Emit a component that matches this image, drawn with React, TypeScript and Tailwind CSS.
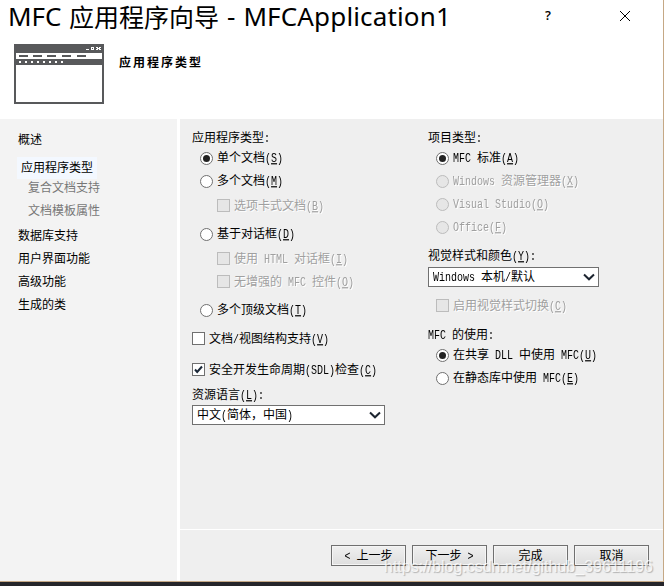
import React from 'react';
import clsx from 'clsx';

interface LabelProps {
  text: string;
  hotkey?: string;
  suffix?: string;
  disabled?: boolean;
  className?: string;
}

// Half-width characters take exactly half of a full-width cell
function Mixed({ text }: { text: string }): React.JSX.Element {
  return (
    <>
      {text.split(/([\x20-\x7e]+)/).map((part, i) =>
        i % 2 === 1 ? (
          <span
            key={i}
            className="inline-block origin-[50%_70%] scale-y-120 font-['Liberation_Mono',monospace] text-[10px]"
          >
            {part}
          </span>
        ) : (
          part
        )
      )}
    </>
  );
}

function Label({ text, hotkey, suffix = '', disabled, className }: LabelProps): React.JSX.Element {
  return (
    <span
      className={clsx(
        'block h-[13px] whitespace-pre leading-[13px]',
        disabled ? 'text-[#a0a0a0] [text-shadow:1px_1px_0_#fff]' : 'text-black',
        className
      )}
    >
      <span className="relative -top-px">
        <Mixed text={hotkey ? `${text}(` : text} />
        {hotkey && (
          <span className="inline-block origin-[50%_70%] scale-y-120 font-['Liberation_Mono',monospace] text-[10px] underline decoration-1 underline-offset-1">
            {hotkey}
          </span>
        )}
        <Mixed text={hotkey ? `)${suffix}` : suffix} />
      </span>
    </span>
  );
}

interface OptionProps extends LabelProps {
  checked?: boolean;
  lift?: string;
}

function Radio({ checked, disabled, className, lift = 'mb-[3px]', ...label }: OptionProps): React.JSX.Element {
  return (
    <div className={clsx('flex h-[13px] items-center gap-1', className)}>
      <span
        className={clsx(
          'flex size-[13px] shrink-0 items-center justify-center rounded-full border',
          disabled ? 'border-[#bcbcbc] bg-[#e6e6e6]' : 'border-[#707070] bg-white'
        )}
      >
        {checked && <span className="size-[7px] rounded-full bg-[#222]" />}
      </span>
      <Label {...label} disabled={disabled} className={lift} />
    </div>
  );
}

function Check({ checked, disabled, className, lift, ...label }: OptionProps): React.JSX.Element {
  return (
    <div className={clsx('flex h-[13px] items-center gap-1', className)}>
      <span
        className={clsx(
          'flex size-[13px] shrink-0 items-center justify-center border',
          disabled ? 'border-[#bcbcbc] bg-[#e6e6e6]' : 'border-[#707070] bg-white'
        )}
      >
        {checked && (
          <svg width="11" height="11" viewBox="0 0 11 11" fill="none" stroke="#1b2838" strokeWidth="2">
            <path d="M2 5.5 4.2 8 9 2.5" />
          </svg>
        )}
      </span>
      <Label {...label} disabled={disabled} className={lift} />
    </div>
  );
}

function Select({ value, className }: { value: string; className?: string }): React.JSX.Element {
  return (
    <div className={clsx('flex h-5 items-center justify-between border border-[#707070] bg-white pl-1 pr-[3px]', className)}>
      <Label text={value} className="mb-[2px]" />
      <svg width="12" height="8" viewBox="0 0 12 8" fill="none" stroke="#1d2530" strokeWidth="2">
        <path d="M1 1.5 6 6.3 11 1.5" />
      </svg>
    </div>
  );
}

function AppIcon(): React.JSX.Element {
  return (
    <svg width="90" height="60" viewBox="0 0 90 60" shapeRendering="crispEdges">
      <rect width="90" height="60" fill="#58595b" />
      <rect x="2" y="9" width="86" height="6" fill="#fff" />
      <rect x="2" y="21" width="86" height="37" fill="#fff" />
      <path d="M5 12h9M19 12h9M33 12h9M48 12h9M63 12h9" stroke="#58595b" strokeWidth="2" />
      <path d="M5 18h46" stroke="#fff" strokeWidth="2" strokeDasharray="2 4" />
      <path d="M72 5h3v1h-3z" fill="#fff" />
      <path d="M77 3h3v3h-3zM78 4v1h1v-1z" fill="#fff" fillRule="evenodd" />
      <path d="M82 3h2v1h1v-1h2v1h-1v1h1v1h-2v-1h-1v1h-2v-1h1v-1h-1z" fill="#fff" />
    </svg>
  );
}

function Button({ children }: { children: string }): React.JSX.Element {
  return (
    <button className="flex h-[21px] w-[75px] items-center justify-center border border-[#707070] bg-linear-to-b from-[#f0f0f0] to-[#dedede] shadow-[inset_0_0_0_1px_#f5f5f5]">
      <Label text={children} className="mb-px" />
    </button>
  );
}

export default function App(): React.JSX.Element {
  return (
    <div className="relative h-[586px] w-[664px] overflow-hidden bg-[#25252a] font-['Noto_Sans_CJK_SC',sans-serif] text-xs">
      <div className="flex h-[582px] flex-col border-r border-b border-[#c5a885] bg-white">
        {/* Title bar */}
        <header className="h-[119px] shrink-0">
          <div className="flex h-8 items-center">
            <h1 className="flex w-[540px] items-center whitespace-pre pl-2 font-['Noto_Sans',sans-serif] text-[26px] leading-[38px] text-black">
              <span className="w-[61px]">MFC</span>
              <span className="font-['Noto_Sans_CJK_SC',sans-serif] text-[25px]">应用程序向导</span>
              <span className="pl-[8px]">-</span>
              <span className="pl-[8px] tracking-[0.15px]">MFCApplication1</span>
            </h1>
            <span className="w-4 text-center font-['Open_Sans',sans-serif] text-[13px] font-semibold text-black">?</span>
            <svg className="ml-[64px]" width="10" height="10" viewBox="0 0 10 10" stroke="#000" strokeWidth="1">
              <path d="M0 0 10 10M10 0 0 10" />
            </svg>
          </div>
          <div className="flex gap-[15px] pl-[14px] pt-3">
            <AppIcon />
            <h2 className="pt-[11px] text-xs font-bold leading-[14px] tracking-[2px] text-black">应用程序类型</h2>
          </div>
        </header>

        <div className="flex min-h-0 flex-1">
          {/* Steps */}
          <nav className="w-[177px] shrink-0 bg-[#f3f3f3] pt-[14px]">
            <Label text="概述" className="ml-[18px]" />
            <div className="ml-[17px] mt-[11px] flex h-[22px] w-20 items-center bg-[#f3f8ff] pl-1">
              <Label text="应用程序类型" className="mb-[2px]" />
            </div>
            <Label text="复合文档支持" className="ml-7 mt-[2px] text-[#777]!" />
            <Label text="文档模板属性" className="ml-7 mt-[10px] text-[#777]!" />
            <Label text="数据库支持" className="ml-[18px] mt-3" />
            <Label text="用户界面功能" className="ml-[18px] mt-[10px]" />
            <Label text="高级功能" className="ml-[18px] mt-[10px]" />
            <Label text="生成的类" className="ml-[18px] mt-[10px]" />
          </nav>

          <main className="ml-[3px] flex flex-1 flex-col bg-[#efefef]">
            <div className="flex h-[410px] pl-3 pt-3">
              <section className="w-[236px]">
                <Label text="应用程序类型:" />
                <Radio text="单个文档" hotkey="S" checked className="ml-2 mt-2" />
                <Radio text="多个文档" hotkey="M" className="ml-2 mt-[10px]" />
                <Check text="选项卡式文档" hotkey="B" disabled className="ml-[25px] mt-[11px]" />
                <Radio text="基于对话框" hotkey="D" className="ml-2 mt-4" />
                <Check text="使用 HTML 对话框" hotkey="I" disabled className="ml-[25px] mt-[11px]" />
                <Check text="无增强的 MFC 控件" hotkey="O" disabled className="ml-[25px] mt-[10px]" />
                <Radio text="多个顶级文档" hotkey="T" className="ml-2 mt-4" />
                <Check text="文档/视图结构支持" hotkey="V" className="mt-[15px]" lift="mb-px" />
                <Check text="安全开发生命周期(SDL)检查" hotkey="C" checked className="mt-[18px]" lift="mb-px" />
                <Label text="资源语言" hotkey="L" suffix=":" className="mt-3" />
                <Select value="中文(简体，中国)" className="mt-1 w-[193px]" />
              </section>

              <section>
                <Label text="项目类型:" />
                <Radio text="MFC 标准" hotkey="A" checked className="ml-2 mt-2" />
                <Radio text="Windows 资源管理器" hotkey="X" disabled className="ml-2 mt-[10px]" />
                <Radio text="Visual Studio" hotkey="O" disabled className="ml-2 mt-[10px]" />
                <Radio text="Office" hotkey="F" disabled className="ml-2 mt-[10px]" />
                <Label text="视觉样式和颜色" hotkey="Y" suffix=":" className="mt-[15px]" />
                <Select value="Windows 本机/默认" className="mt-[5px] w-[171px]" />
                <Check text="启用视觉样式切换" hotkey="C" disabled className="ml-2 mt-3" />
                <Label text="MFC 的使用:" className="mt-4" />
                <Radio text="在共享 DLL 中使用 MFC" hotkey="U" checked className="ml-2 mt-2" />
                <Radio text="在静态库中使用 MFC" hotkey="E" className="ml-2 mt-[10px]" />
              </section>
            </div>

            <footer className="flex flex-1 justify-end gap-[6px] border-t border-white pr-[14px] pt-[15px]">
              <Button>{'< 上一步'}</Button>
              <Button>{'下一步 >'}</Button>
              <Button>完成</Button>
              <Button>取消</Button>
            </footer>
          </main>
        </div>
      </div>

      {/* Watermark */}
      <div className="absolute left-[384px] top-[557px] whitespace-nowrap font-['Liberation_Sans',sans-serif] text-base leading-5 text-white/75 [text-shadow:1px_1px_1px_rgba(0,0,0,0.25)]">
        https://blog.csdn.net/github_39611196
      </div>
    </div>
  );
}
